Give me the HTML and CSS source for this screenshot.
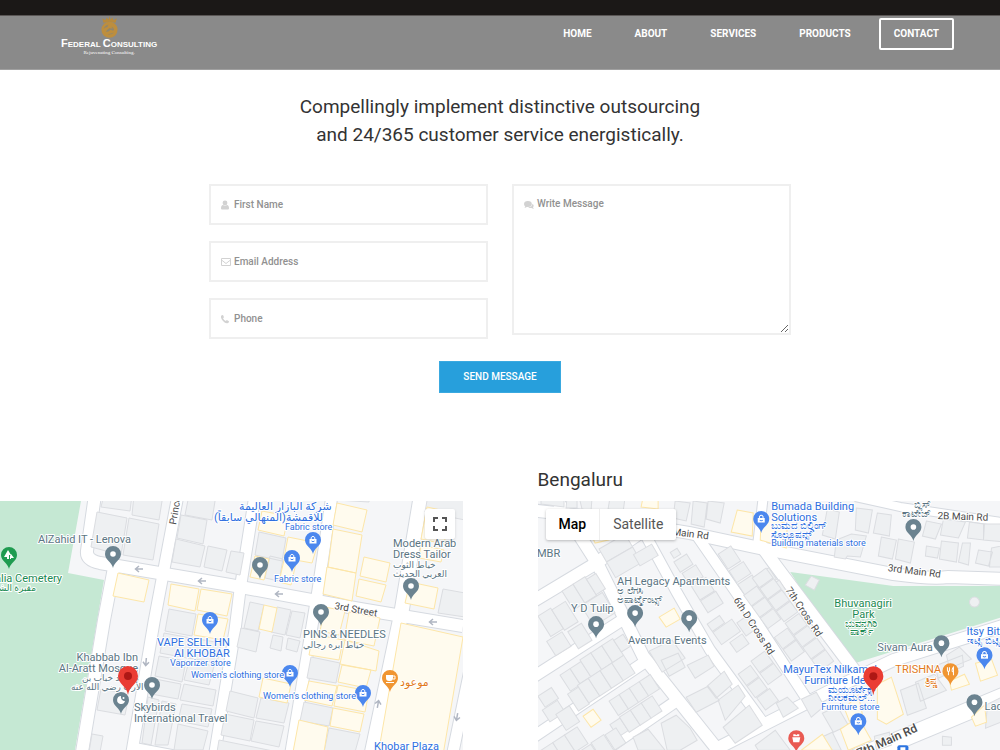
FILE: index.html
```html
<!DOCTYPE html>
<html lang="en">
<head>
<meta charset="utf-8">
<meta name="viewport" content="width=device-width, initial-scale=1">
<title>Federal Consulting - Contact</title>
<link rel="stylesheet" href="styles.css">
</head>
<body>
<div class="hero-strip"></div>
<header class="header">
  <a class="brand" href="#" aria-label="Federal Consulting">
    <svg class="brand-mark" viewBox="0 0 20 24" aria-hidden="true">
      <path d="M3.500 7.500L2 2.500L5.500 4.500L7 1.500L9 4L10 0L11 4L13 1.500L14.500 4.500L18 2.500L16.500 7.500Q10 5 3.500 7.500Z" fill="#b88a3c"/>
      <circle cx="10" cy="15" r="8.800" fill="#bd8e3e"/>
      <path d="M3.500 14Q5 10 9 9.500Q7 11 8 12Q5 12 3.500 14ZM6 17Q9 18 11 15L14 16L15 14.500Q14 12 12 11.500L13.500 14L10 13Q8 14 6 17ZM8 20Q12 21 15 18Q12 19 8 20Z" fill="#8f8670"/>
    </svg>
    <span class="brand-name"><span class="cap">F</span>EDERAL <span class="cap">C</span>ONSULTING</span>
    <span class="brand-tag">Rejuvenating Consulting.</span>
  </a>
  <nav class="nav">
    <a href="#">HOME</a>
    <a href="#">ABOUT</a>
    <a href="#">SERVICES</a>
    <a href="#">PRODUCTS</a>
    <a class="active" href="#">CONTACT</a>
  </nav>
</header>
<main>
  <section class="contact">
    <h2>Compellingly implement distinctive outsourcing<br>and 24/365 customer service energistically.</h2>
    <form class="form">
      <div class="fields">
        <label class="field">
          <svg viewBox="0 0 10 10" aria-hidden="true"><circle cx="4" cy="3" r="2.400"/><path d="M0 8.500Q0 5 2 5Q4 6.500 6 5Q8 5 8 8.500Q8 9.500 7 9.500H1Q0 9.500 0 8.500Z"/></svg>
          <input type="text" placeholder="First Name" aria-label="First Name">
        </label>
        <label class="field">
          <svg viewBox="0 0 10 10" aria-hidden="true"><path class="line" d="M.5 1.500H9.500V8.500H.5ZM.5 3L5 6.500L9.500 3"/></svg>
          <input type="email" placeholder="Email Address" aria-label="Email Address">
        </label>
        <label class="field">
          <svg viewBox="0 0 10 10" aria-hidden="true"><path d="M0 2Q.5 1 2 1L3 3.300L2 4.300Q3 6.200 4.800 7L5.800 6L8 7.200Q8 8.700 7 9Q4.500 9.800 2 7Q-.5 4 0 2Z"/></svg>
          <input type="tel" placeholder="Phone" aria-label="Phone">
        </label>
      </div>
      <label class="field message">
        <svg viewBox="0 0 10 10" aria-hidden="true"><ellipse cx="3.900" cy="4" rx="3.900" ry="2.900"/><path d="M1.500 5.500L.6 8L4 6.500Z"/><path d="M8.500 3.800Q10.600 5.500 9 7.300L9.800 9L7.400 8Q5 8.200 4.200 7.500Q8 7.200 8.500 3.800Z"/></svg>
        <textarea placeholder="Write Message" aria-label="Write Message"></textarea>
      </label>
      <button class="send" type="submit">SEND MESSAGE</button>
    </form>
  </section>

  <section class="locations">
    <div class="location">
      <div class="map">
        <svg class="canvas" viewBox="0 501 463 249" preserveAspectRatio="xMinYMin slice" role="img" aria-label="Map of Khobar">
          <defs>
            <path id="pin" d="M0 14C-1 8-8 6-8 0A8 8 0 1 1 8 0C8 6 1 8 0 14Z"/>
            <g id="bag"><path d="M-3.500-1H3.500V3.500H-3.500Z" fill="#fff"/><path d="M-1.800-1V-2.500Q0-5 1.800-2.500V-1" fill="none" stroke="#fff"/><path d="M-1.500 1Q0 2.500 1.500 1" fill="none" stroke="#4b87ee"/></g>
            <g id="place"><use href="#pin" fill="#6b8390"/><circle r="2.800" fill="#fff"/></g>
            <g id="shop"><use href="#pin" fill="#4b87ee"/><use href="#bag"/></g>
            <g id="marker"><path d="M0 18C-1 9-10 7-10-1A10 10 0 1 1 10-1C10 7 1 9 0 18Z" fill="#ea3c33"/><circle r="4" cy="-1" fill="#ae1815"/></g>
            <path id="arrow" d="M4 0H-3M0-3L-3.500 0L0 3" fill="none" stroke="#b0b6c2" stroke-width="1.500"/>
          </defs>
          <rect y="501" width="463" height="249" class="land"/>
          <path class="park" d="M0 501H81L68 573L104 580L75 750H0Z"/>
          <g class="road-edge">
            <path d="M95 495L87 551Q86 560 100 563L230 585L360 609L463 626" stroke-width="14"/>
            <path d="M114 568L104 620L82 752" stroke-width="14"/>
            <path d="M178 495L154 622L132 752" stroke-width="13"/>
            <path d="M255 495L240 590L235 630L215 752" stroke-width="13"/>
            <path d="M332 495L318 590L291 752" stroke-width="13"/>
            <path d="M421 495L401 615L372 752" stroke-width="16"/>
            <path d="M470 670L453 752" stroke-width="13"/>
            <path d="M132 746L218 762" stroke-width="9"/>
          </g>
          <g class="road">
            <path d="M95 495L87 551Q86 560 100 563L230 585L360 609L463 626" stroke-width="12"/>
            <path d="M114 568L104 620L82 752" stroke-width="12"/>
            <path d="M178 495L154 622L132 752" stroke-width="11"/>
            <path d="M255 495L240 590L235 630L215 752" stroke-width="11"/>
            <path d="M332 495L318 590L291 752" stroke-width="11"/>
            <path d="M421 495L401 615L372 752" stroke-width="14"/>
            <path d="M470 670L453 752" stroke-width="11"/>
            <path d="M132 746L218 762" stroke-width="7"/>
          </g>
          <g class="building">
            <path d="M104 495H132L130 511L101 507ZM134 495H163L159 520L132 515ZM97 512L127 518L121 555L91 547ZM129 518L159 524L153 560L123 555Z"/>
            <path d="M189 495H216L212 520L185 515ZM181 515L207 520L203 544L177 538ZM176 539L205 546L200 567L172 562ZM208 546L227 550L222 571L204 567ZM231 551L244 553L240 575L226 572Z"/>
            <path d="M259 532L286 538L282 561L255 555ZM270 556L283 559L279 581L265 578Z"/>
            <path d="M169 609L196 614L192 636L165 631ZM164 633L191 638L187 658L160 653ZM192 638L221 643L217 663L188 658ZM159 656L186 661L182 682L155 676ZM189 661L214 666L209 685L184 680ZM155 679L181 684L178 699L151 694ZM184 684L216 690L213 706L180 700Z"/>
            <path d="M148 697L159 700L151 745L142 743ZM162 701L176 704L168 745L155 745ZM178 724L208 731L203 750H174ZM182 704L212 709L208 727L178 721ZM101 689L119 692L128 700L125 715L97 710ZM92 734L103 736L100 752H89Z"/>
            <path d="M250 602L264 605L258 631L244 628ZM277 607L291 610L285 635L271 632ZM292 611L305 613L300 638L286 635ZM241 628L260 632L256 652L237 647ZM273 635L283 637L281 651L270 648ZM288 638L300 641L297 652L286 649Z"/>
            <path d="M311 657L340 663L336 683L307 678ZM304 702L333 708L329 726L300 721ZM329 728L360 734L355 752H324ZM230 691L258 698L254 718L226 711ZM261 698L289 703L284 723L256 718ZM225 714L254 720L250 741L221 735ZM256 721L284 726L279 747L251 741ZM219 740L278 752H217Z"/>
            <path d="M337 494H370L369 502L336 500ZM428 495H465V520L425 512ZM443 589L465 593V617L438 613Z"/>
          </g>
          <g class="building gold">
            <path d="M118 573L149 580L144 602L113 596ZM171 584L199 589L195 611L168 605ZM201 589L232 594L227 616L197 610ZM198 614L228 619L223 640L194 635Z"/>
            <path d="M262 511L288 516L284 536L258 530ZM288 537L318 543L312 563L284 558ZM255 556L269 559L264 580L250 577ZM284 560L296 563L291 585L279 582Z"/>
            <path d="M337 503L367 510L362 532L333 525ZM333 529L362 535L356 573L328 567ZM327 567L356 573L352 601L323 594ZM364 557L390 563L386 582L360 576ZM359 579L386 585L381 602L356 596ZM427 507L450 512L444 544L421 539ZM421 545L444 550L441 562L419 558ZM410 582L438 588L434 609L405 603Z"/>
            <path d="M264 605L277 608L272 632L259 629ZM325 607L345 611L339 635L320 631ZM349 612L380 618L374 646L344 640ZM313 634L343 640L339 660L309 655ZM345 640L379 651L376 671L340 664ZM342 665L371 670L366 688L338 682ZM309 681L337 686L332 706L304 700ZM338 685L369 691L365 712L334 706ZM333 708L364 714L360 732L330 726ZM299 720L328 727L324 752H293ZM263 678L291 684L287 703L259 697Z"/>
            <path d="M401 623L463 637L443 755H378Z"/>
          </g>
          <use href="#arrow" x="139" y="569"/><use href="#arrow" x="202" y="581"/><use href="#arrow" x="279" y="594"/><use href="#arrow" x="433" y="622"/>
          <use href="#arrow" transform="translate(146 662) rotate(-85)"/>
          <use href="#arrow" transform="translate(378 704) rotate(100)"/>
          <use href="#arrow" transform="translate(457 717) rotate(-80)"/>
          <use href="#place" x="113" y="554"/><use href="#place" x="260" y="565"/><use href="#place" x="321" y="612"/><use href="#place" x="411" y="586"/><use href="#place" x="152" y="685"/>
          <g transform="translate(121 700)"><use href="#pin" fill="#6b8390"/><path d="M0-4A4 4 0 1 0 4 1A4 4 0 0 1 0-4Z" fill="#fff"/><circle cx="2.500" cy="-2" r="1" fill="#fff"/></g>
          <use href="#shop" x="313" y="540"/><use href="#shop" x="292" y="558"/><use href="#shop" x="210" y="620"/><use href="#shop" x="290" y="673"/><use href="#shop" x="363" y="693"/>
          <g transform="translate(390 678)"><use href="#pin" fill="#f09532"/><path d="M-4-3H3V0Q3 3 0 3H-1Q-4 3-4 0ZM-4 4H4V5H-4Z" fill="#fff"/><path d="M3-2H5V1H3" fill="none" stroke="#fff"/></g>
          <g transform="translate(9 555)"><use href="#pin" fill="#1f9b50"/><path d="M-1-5L2 0H0V4H-2V2H-5ZM2-1L5 3H2V4H1V1Z" fill="#fff"/></g>
          <g class="place-label">
            <text x="38" y="543">AlZahid IT - Lenova</text>
            <text x="393" y="547">Modern Arab</text><text x="393" y="558">Dress Tailor</text>
            <text x="393" y="568" class="small">خياط الثوب</text><text x="393" y="577" class="small">العربي الحديث</text>
            <text x="303" y="638">PINS &amp; NEEDLES</text><text x="303" y="648" class="small">خياط ابره رجالي</text>
            <g class="end"><text x="138" y="661">Khabbab Ibn</text><text x="138" y="672">Al-Aratt Mosque</text></g>
            <text x="82" y="681" class="small">مسجد خباب بن</text><text x="71" y="690" class="small">الأرت رضي الله عنه</text>
            <text x="134" y="711">Skybirds</text><text x="134" y="722">International Travel</text>
          </g>
          <g class="place-label blue">
            <text x="239" y="510">شركة البازار العاليمة</text><text x="214" y="521">للاقمشة(المنهالي سابقاً)</text>
            <g class="small"><text x="285" y="530">Fabric store</text><text x="274" y="582">Fabric store</text><text x="170" y="666">Vaporizer store</text><text x="191" y="678">Women's clothing store</text><text x="263" y="699">Women's clothing store</text></g>
            <text x="157" y="646">VAPE SELL HN</text><text x="174" y="657">Al KHOBAR</text><text x="374" y="750">Khobar Plaza</text>
          </g>
          <text class="place-label orange" x="400" y="686">موعود</text>
          <g class="place-label green"><text class="end" x="62" y="582">Jalia Cemetery</text><text class="end small" x="36" y="591">مقبرة الشهداء</text></g>
          <g class="street"><text transform="translate(176 525) rotate(-80)">Prince</text><text transform="translate(334 609) rotate(10)">3rd Street</text></g>
          <use href="#marker" x="128" y="677"/>
        </svg>
        <button class="fullscreen" type="button" aria-label="Toggle fullscreen view"><svg viewBox="0 0 14 14" aria-hidden="true"><path d="M1 5V1H5M9 1H13V5M13 9V13H9M5 13H1V9"/></svg></button>
      </div>
    </div>
    <div class="location">
      <h3>Bengaluru</h3>
      <div class="map">
        <svg class="canvas" viewBox="538 501 462 249" preserveAspectRatio="xMinYMin slice" role="img" aria-label="Map of Bengaluru">
          <rect x="538" y="501" width="470" height="249" class="land"/>
          <path class="park" d="M790 572L893 586H1008V615L880 655L848 665Z"/>
          <g class="road-edge">
            <path d="M530 510L600 518L690 533L760 548L893 574Q930 579 948 577L1008 579" stroke-width="14"/>
            <path d="M855 497L900 507L1008 523" stroke-width="10"/>
            <path d="M555 497L597 563L643 656L713 744L725 760" stroke-width="14"/>
            <path d="M640 525L677 593L710 650L767 728" stroke-width="12"/>
            <path d="M697 536L753 617L806 698" stroke-width="12"/>
            <path d="M757 540L775 565L860 678" stroke-width="14"/>
            <path d="M763 497L757 548" stroke-width="11"/>
            <path d="M530 603L593 565L640 533" stroke-width="14"/>
            <path d="M530 679L622 620" stroke-width="13"/>
            <path d="M530 739L646 661" stroke-width="13"/>
            <path d="M590 760L676 701" stroke-width="13"/>
            <path d="M713 750L847 682L893 660L1008 624" stroke-width="14"/>
            <path d="M850 760L1008 694" stroke-width="19"/>
          </g>
          <g class="road">
            <path d="M530 510L600 518L690 533L760 548L893 574Q930 579 948 577L1008 579" stroke-width="12"/>
            <path d="M855 497L900 507L1008 523" stroke-width="8"/>
            <path d="M555 497L597 563L643 656L713 744L725 760" stroke-width="12"/>
            <path d="M640 525L677 593L710 650L767 728" stroke-width="10"/>
            <path d="M697 536L753 617L806 698" stroke-width="10"/>
            <path d="M757 540L775 565L860 678" stroke-width="12"/>
            <path d="M763 497L757 548" stroke-width="9"/>
            <path d="M530 603L593 565L640 533" stroke-width="12"/>
            <path d="M530 679L622 620" stroke-width="11"/>
            <path d="M530 739L646 661" stroke-width="11"/>
            <path d="M590 760L676 701" stroke-width="11"/>
            <path d="M713 750L847 682L893 660L1008 624" stroke-width="12"/>
            <path d="M850 760L1008 694" stroke-width="17"/>
          </g>
          <g class="building">
            <path d="M541 497H564V507L541 504ZM567 497H577V508H566ZM579 497H592L591 511L582 509ZM610 497H625L623 512L608 509ZM675 501L690 503L686 521L673 518ZM693 501L707 503L704 527L691 524ZM708 501L724 503L720 523L706 519Z"/>
            <g transform="translate(599 549) rotate(-30)"><rect width="30" height="15"/><rect y="15" width="30" height="18"/><rect x="27" y="22" width="21" height="13"/></g>
            <g transform="translate(562 591) rotate(-32)"><rect width="13" height="22"/><rect x="13" width="14" height="22"/><rect x="27" y="3" width="11" height="18"/></g>
            <g transform="translate(538 616) rotate(-32)"><rect width="15" height="24"/><rect x="15" y="2" width="16" height="24"/><rect x="-6" y="26" width="18" height="17"/><rect x="17" y="29" width="16" height="20"/><rect x="42" y="14" width="25" height="24"/></g>
            <g transform="translate(560 675) rotate(-33)"><rect width="12" height="19"/><rect x="12" width="13" height="18"/><rect x="25" y="-2" width="13" height="20"/><rect x="38" y="-2" width="13" height="20"/><rect x="51" y="-2" width="13" height="20"/><rect x="64" width="11" height="14"/><rect x="-4" y="20" width="13" height="20"/><rect x="9" y="18" width="13" height="21"/><rect x="22" y="18" width="14" height="21"/><rect x="36" y="18" width="14" height="21"/><rect x="50" y="18" width="14" height="21"/></g>
            <g transform="translate(538 696) rotate(-33)"><rect width="16" height="13"/><rect x="-4" y="14" width="18" height="14"/><rect x="5" y="25" width="16" height="19"/></g>
            <g transform="translate(609 701) rotate(-33)"><rect width="12" height="17"/><rect x="12" width="12" height="17"/><rect x="24" width="12" height="17"/><rect x="36" width="13" height="17"/><rect x="-12" y="20" width="12" height="15"/><rect x="0" y="19" width="13" height="18"/><rect x="13" y="19" width="13" height="18"/><rect x="26" y="19" width="13" height="18"/></g>
            <g transform="translate(541 750) rotate(-33)"><rect width="14" height="20"/><rect x="14" width="14" height="20"/><rect x="28" width="15" height="20"/><rect x="30" y="22" width="15" height="20"/><rect x="46" y="21" width="15" height="20"/><rect x="62" y="22" width="13" height="18"/></g>
            <path d="M633 737L648 729L665 750H638ZM661 723L676 715L690 728L697 740L680 750H667ZM649 651L672 640L685 658L662 672ZM661 660L678 653L685 667L669 676ZM687 665L708 655L714 666L695 678Z"/>
            <g transform="translate(670 556) rotate(-32)"><rect x="2" y="-3" width="8" height="7"/><rect y="7" width="15" height="12"/><rect x="1" y="21" width="16" height="14"/><rect x="2" y="37" width="17" height="16"/><rect x="2" y="54" width="18" height="14"/></g>
            <g transform="translate(718 554) rotate(-33)"><rect width="15" height="18"/><rect x="0" y="20" width="17" height="14"/><rect x="0" y="36" width="17" height="14"/><rect x="1" y="52" width="16" height="14"/><rect x="19" y="39" width="16" height="14"/><rect x="20" y="55" width="17" height="14"/></g>
            <g transform="translate(707 624) rotate(-35)"><rect width="15" height="9"/><rect y="10" width="23" height="15"/><rect x="25" y="16" width="14" height="16"/><rect x="8" y="28" width="15" height="12"/></g>
            <g transform="translate(738 674) rotate(-36)"><rect width="15" height="14"/><rect x="0" y="15" width="15" height="14"/><rect x="18" y="-3" width="17" height="14"/><rect x="18" y="12" width="17" height="14"/><rect x="1" y="30" width="16" height="15"/></g>
            <path d="M686 697L708 686L719 700L696 712ZM707 686L724 671L732 684L716 698ZM718 700L738 685L745 696L725 720ZM723 727L749 705L762 725L735 743Z"/>
            <g transform="translate(752 578) rotate(-36)"><rect width="17" height="12"/><rect y="13" width="17" height="13"/><rect y="27" width="17" height="13"/><rect y="41" width="17" height="13"/><rect x="-17" y="9" width="16" height="13"/><rect x="-17" y="23" width="16" height="13"/><rect x="-17" y="37" width="16" height="13"/><rect y="56" width="17" height="14"/><rect y="71" width="17" height="14"/><rect x="0" y="86" width="17" height="14"/><rect x="0" y="101" width="17" height="14"/><rect x="-17" y="61" width="16" height="14"/><rect x="-17" y="76" width="16" height="14"/></g>
            <path d="M827 509L839 512L835 539L822 535ZM856 508L872 510L868 533L855 530ZM877 513L891 515L889 536L873 533ZM881 537L896 540L892 559L878 556ZM898 539L914 542L910 563L895 559ZM926 521L941 524L935 539L922 536ZM943 519L965 522L958 538L940 535ZM969 522L983 524V540L967 538ZM984 524H1005V542L983 540ZM926 546L939 548L937 558L925 556ZM941 541L958 543L956 562L939 559ZM962 543L970 543L968 565L958 562ZM978 550L992 552L988 566L975 563ZM991 548L1005 545V567H989ZM836 540L851 534L866 536L860 557L847 556L845 559L834 557Z"/>
            <path d="M811 576L819 580L814 590L805 585ZM900 690L918 683L926 708L907 715ZM915 682L934 674L946 690L920 701ZM934 666L962 655L963 666L938 678ZM946 655L959 647L971 659L949 668ZM874 736L889 732L891 745L876 750ZM942 736L951 737V745H942ZM987 704L1005 695V720L985 728ZM801 699L816 692L824 706L811 717ZM776 703L787 697L798 708L783 717ZM822 713L837 706L848 725L833 732ZM819 738L832 732L841 750H822ZM755 745L775 730L790 750H758Z"/>
            <circle cx="974" cy="602" r="5"/>
          </g>
          <g class="building gold">
            <path d="M643 497H658V509L641 507ZM737 510L753 513L752 536L731 532ZM761 515L787 524L786 548L760 540ZM591 534L608 540L595 543ZM659 617L674 608L680 619L666 627ZM583 716L593 709L601 720L591 727Z"/>
            <path d="M877 684L891 677L903 714L886 724L877 719ZM844 708L858 695L862 714L849 721ZM840 729L858 717L871 740L848 750ZM949 681L964 674L969 684L951 690ZM975 663L991 659L997 675L980 681ZM971 717L984 705L986 722L975 726ZM801 750L822 734L832 750Z"/>
          </g>
          <use href="#shop" x="761" y="519"/><use href="#shop" x="984" y="655"/><use href="#shop" x="858" y="721"/>
          <use href="#place" x="913" y="527"/><use href="#place" x="635" y="613"/><use href="#place" x="596" y="624"/><use href="#place" x="689" y="618"/><use href="#place" x="941" y="643"/><use href="#place" x="974" y="702"/>
          <g transform="translate(950 671)"><use href="#pin" fill="#f09532"/><path d="M-3-4V0M-1-4V0M-3 0H-1M-2 0V4M3 4V-4Q1-2 2 1" fill="none" stroke="#fff"/></g>
          <g transform="translate(796 738)"><use href="#pin" fill="#e95a52"/><path d="M-4-1H4L3 4H-3ZM-3-2V-4H-1L0-3L1-4H3V-2Z" fill="#fff"/></g>
          <rect x="897" y="745" width="11" height="9" rx="2" fill="#2d74e0"/><rect x="900" y="747" width="5" height="5" fill="#fff"/>
          <g class="place-label">
            <text x="537" y="557">MBR</text><text x="617" y="585">AH Legacy Apartments</text>
            <text class="kannada" x="617" y="594">ಅ ಲೆಗಸಿ</text><text class="kannada" x="617" y="603">ಅಪಾರ್ಟ್ಮೆಂಟ್ಸ್</text>
            <text x="571" y="612">Y D Tulip</text><text x="628" y="644">Aventura Events</text><text x="877" y="651">Sivam Aura</text><text x="984" y="710">Ladle</text>
            <text class="kannada" x="914" y="508">ಬ್ಲಿಸ್</text><text class="kannada" x="902" y="517">ಕಾಟೇಜ್</text>
          </g>
          <g class="place-label blue">
            <text x="771" y="510">Bumada Building</text><text x="771" y="521">Solutions</text>
            <g class="kannada"><text x="771" y="529">ಬುಮದ ಬಿಲ್ಡಿಂಗ್</text><text x="771" y="538">ಸೊಲ್ಯೂಷನ್ಸ್</text><text x="828" y="693">ಮಯೂರ್ಟೆಕ್ಸ್</text><text x="828" y="701">ನೀಲಕಮಲ್...</text><text x="967" y="644">ಇಟ್ಸಿ ಬಿಟ್ಸಿ</text></g>
            <g class="small"><text x="771" y="546">Building materials store</text><text x="821" y="710">Furniture store</text></g>
            <text x="783" y="673">MayurTex Nilkamal</text><text x="804" y="684">Furniture Ideas</text><text x="966" y="635">Itsy Bitsy</text>
          </g>
          <g class="place-label orange"><text x="895" y="673">TRISHNA</text><text class="kannada" x="925" y="684">ತ್ರಿಷ್ಣ</text></g>
          <g class="place-label green"><text x="834" y="607">Bhuvanagiri</text><text x="852" y="618">Park</text><text class="kannada" x="845" y="627">ಭುವನಗಿರಿ</text><text class="kannada" x="850" y="635">ಪಾರ್ಕ್</text></g>
          <g class="street">
            <text transform="translate(672 535) rotate(7)">Main Rd</text>
            <text transform="translate(937 519) rotate(2)">2B Main Rd</text>
            <text transform="translate(887 571) rotate(7)">3rd Main Rd</text>
            <text transform="translate(733 600) rotate(57)">6th D Cross Rd</text>
            <text transform="translate(785 590) rotate(56)">7th Cross Rd</text>
            <text class="major" transform="translate(859 757) rotate(-24)">7th Main Rd</text>
          </g>
          <use href="#marker" x="873" y="677"/>
        </svg>
        <div class="map-type"><button class="on" type="button">Map</button><button type="button">Satellite</button></div>
      </div>
    </div>
  </section>
</main>
</body>
</html>
```
FILE: styles.css
```css
* { box-sizing: border-box; }

body {
  margin: 0;
  background: #fff;
  color: #333;
  font-family: Roboto, "Liberation Sans", sans-serif;
}

.hero-strip {
  height: 15px;
  background: #1b1817;
}

.header {
  display: flex;
  align-items: flex-start;
  justify-content: space-between;
  padding: 0 46px 0 61px;
  height: 55px;
  background: #8a8a8a;
  border-top: 1px solid #5a5655;
  border-bottom: 1px solid #a0a0a0;
}

.brand {
  display: flex;
  flex-direction: column;
  align-items: center;
  color: #fff;
  text-decoration: none;
}

.brand-mark { width: 19px; height: 22px; }

.brand-name {
  font: 700 8px/11px "Liberation Sans", sans-serif;
}

.brand-name .cap { font-size: 11px; }

.brand-tag {
  font: 400 5px/6px "Liberation Serif", serif;
}

.nav {
  display: flex;
  gap: 13px;
  padding-top: 2px;
}

.nav a {
  padding: 0 13px;
  border: 2px solid transparent;
  border-radius: 2px;
  color: #fff;
  font-size: 10px;
  font-weight: 700;
  line-height: 28px;
  text-decoration: none;
}

.nav .active { border-color: #fff; }

.contact { padding: 23px 20px 0; }

.contact h2 {
  margin: 0 0 35px;
  font-size: 19px;
  font-weight: 400;
  line-height: 28px;
  text-align: center;
}

.form {
  display: grid;
  grid-template-columns: 1fr 1fr;
  column-gap: 24px;
  row-gap: 22px;
  max-width: 582px;
  margin: 0 auto;
}

.fields {
  display: grid;
  gap: 16px;
}

.field {
  position: relative;
  display: block;
}

.field svg {
  position: absolute;
  top: 16px;
  left: 12px;
  width: 10px;
  height: 10px;
  fill: #d2d2d2;
}

.field .line {
  fill: none;
  stroke: #d2d2d2;
}

.field input,
.field textarea {
  display: block;
  width: 100%;
  height: 41px;
  margin: 0;
  padding: 0 23px;
  border: 2px solid #efefef;
  border-radius: 0;
  outline: 0;
  background: #fff;
  color: #444;
  font: 500 10px/14px Roboto, sans-serif;
}

.field textarea {
  height: 151px;
  padding-top: 11px;
  resize: vertical;
}

.field ::placeholder {
  color: #919191;
  opacity: 1;
}

.send {
  grid-column: 1 / -1;
  justify-self: center;
  height: 32px;
  padding: 0 23px;
  border: 1px solid #3aa9e0;
  background: #279fdc;
  color: #fff;
  font: 500 10px/14px Roboto, sans-serif;
}

.locations {
  display: grid;
  grid-template-columns: 1fr 1fr;
  align-items: end;
  column-gap: 75px;
  margin-top: 73px;
}

.location h3 {
  margin: 0 0 7px;
  font-size: 19px;
  font-weight: 400;
  line-height: 28px;
}

.map {
  position: relative;
  overflow: hidden;
}

.canvas {
  display: block;
  width: 100%;
  height: 249px;
}

.land { fill: #f5f6f8; }
.park { fill: #c5e8d3; }

.road-edge path { fill: none; stroke: #d6dae0; }
.road path { fill: none; stroke: #fff; }

.building { fill: #eef0f2; stroke: #dbdde1; }
.building.gold { fill: #fffbee; stroke: #fde6a8; }

.place-label {
  fill: #5b7583;
  stroke: #fff;
  stroke-width: 2px;
  stroke-linejoin: round;
  paint-order: stroke;
  font: 400 11px Roboto, "DejaVu Sans", "Noto Sans", sans-serif;
}

.place-label .small { font-size: 9px; }
.place-label .kannada { font-size: 10px; }
.place-label .end { text-anchor: end; }
.place-label.blue { fill: #2e6fe0; }
.place-label.green { fill: #1b8a52; }
.place-label.orange { fill: #e27a1c; }

.street {
  fill: #4c4c4c;
  stroke: #fff;
  stroke-width: 2px;
  paint-order: stroke;
  font: 400 10px Roboto, sans-serif;
}

.street .major { font-size: 12px; font-weight: 500; }

.fullscreen {
  position: absolute;
  top: 8px;
  right: 8px;
  display: grid;
  place-items: center;
  width: 30px;
  height: 30px;
  padding: 0;
  border: 0;
  border-radius: 2px;
  background: #fff;
  box-shadow: 0 1px 3px rgba(0, 0, 0, .15);
}

.fullscreen svg {
  width: 14px;
  height: 14px;
  fill: none;
  stroke: #555;
  stroke-width: 2;
}

.map-type {
  position: absolute;
  top: 8px;
  left: 8px;
  display: flex;
  border-radius: 2px;
  background: #fff;
  box-shadow: 0 1px 3px rgba(0, 0, 0, .25);
}

.map-type button {
  height: 31px;
  padding: 0 13px;
  border: 0;
  background: none;
  color: #565656;
  font: 400 14px/31px Roboto, sans-serif;
}

.map-type button + button { border-left: 1px solid #eee; }

.map-type .on {
  color: #000;
  font-weight: 500;
}
```
